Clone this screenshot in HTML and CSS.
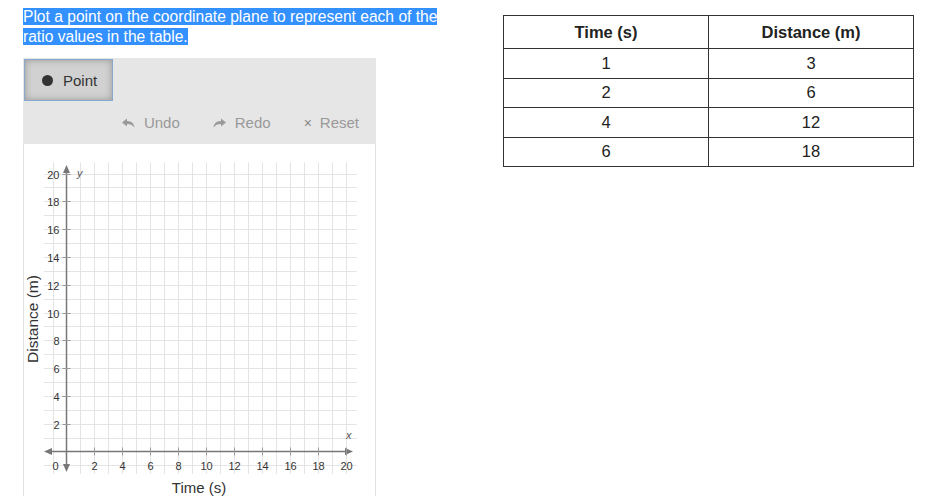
FILE: index.html
```html
<!DOCTYPE html>
<html>
<head>
<meta charset="utf-8">
<link rel="stylesheet" href="styles.css">
</head>
<body>
<div class="page">
  <div class="left">
    <p class="prompt"><span class="sel">Plot a point on the coordinate plane to represent each of the ratio values in the table.</span></p>
    <div class="widget">
      <div class="toolbar">
        <div class="tools">
          <button class="tool active"><span class="dot"></span>Point</button>
        </div>
        <div class="actions">
          <span class="act"><svg width="13" height="10" viewBox="0 0 13 10"><path d="M0 4.5 L5 0.5 L5 3 C9 3 12 5 12.5 9.5 C10.5 7 8.5 6 5 6 L5 8.5 Z" fill="#9a9a9a"/></svg>Undo</span>
          <span class="act"><svg width="13" height="10" viewBox="0 0 13 10"><path d="M13 4.5 L8 0.5 L8 3 C4 3 1 5 0.5 9.5 C2.5 7 4.5 6 8 6 L8 8.5 Z" fill="#9a9a9a"/></svg>Redo</span>
          <span class="act"><span class="x">×</span>Reset</span>
        </div>
      </div>
      <div class="graph">
        <svg class="plane" width="352" height="351" viewBox="0 0 352 351">
          <g id="grid" stroke="#e4e4e4" stroke-width="1"></g>
          <g stroke="#777" stroke-width="1.5" fill="#777">
            <line x1="26" y1="307.5" x2="326" y2="307.5"/>
            <path d="M21 307.5 L29 304 L29 311 Z" stroke="none"/>
            <path d="M330 307.5 L322 304 L322 311 Z" stroke="none"/>
            <line x1="43.5" y1="26" x2="43.5" y2="323"/>
            <path d="M43.5 21 L40 29 L47 29 Z" stroke="none"/>
            <path d="M43.5 328 L40 320 L47 320 Z" stroke="none"/>
          </g>
          <g id="ticks" stroke="#9a9a9a" stroke-width="1"></g>
          <g id="labels" class="lbl"></g>
          <text x="54" y="33" class="var">y</text>
          <text x="323" y="295" class="var">x</text>
        </svg>
        <div class="ylabel">Distance (m)</div>
        <div class="xlabel">Time (s)</div>
      </div>
    </div>
  </div>
  <div class="right">
    <table class="data">
      <thead>
        <tr><th>Time (s)</th><th>Distance (m)</th></tr>
      </thead>
      <tbody>
        <tr><td>1</td><td>3</td></tr>
        <tr><td>2</td><td>6</td></tr>
        <tr><td>4</td><td>12</td></tr>
        <tr><td>6</td><td>18</td></tr>
      </tbody>
    </table>
  </div>
</div>
<script src="script.js"></script>
</body>
</html>
```

FILE: script.js
```js
(function () {
  var NS = "http://www.w3.org/2000/svg";
  var ox = 43.5, oy = 307.5, sx = 13.95, sy = 13.9;
  var grid = document.getElementById("grid");
  var ticks = document.getElementById("ticks");
  var labels = document.getElementById("labels");
  function el(tag, attrs, parent, text) {
    var e = document.createElementNS(NS, tag);
    for (var k in attrs) e.setAttribute(k, attrs[k]);
    if (text !== undefined) e.textContent = text;
    parent.appendChild(e);
    return e;
  }
  var left = ox - sx * 1.6, right = ox + sx * 20.8;
  var top = oy - sy * 20.8, bottom = oy + sy * 1.6;
  for (var i = -1; i <= 20; i++) {
    if (i === 0) continue;
    var x = Math.round(ox + sx * i) + 0.5;
    var y = Math.round(oy - sy * i) + 0.5;
    el("line", { x1: x, y1: top, x2: x, y2: bottom }, grid);
    el("line", { x1: left, y1: y, x2: right, y2: y }, grid);
  }
  for (var v = 2; v <= 20; v += 2) {
    var tx = Math.round(ox + sx * v) + 0.5;
    var ty = Math.round(oy - sy * v) + 0.5;
    el("line", { x1: tx, y1: oy - 4, x2: tx, y2: oy + 4 }, ticks);
    el("line", { x1: ox - 4, y1: ty, x2: ox + 4, y2: ty }, ticks);
    el("text", { x: tx, y: oy + 18, "text-anchor": "middle" }, labels, String(v));
    el("text", { x: ox - 7, y: ty + 4, "text-anchor": "end" }, labels, String(v));
  }
  el("text", { x: ox - 11, y: oy + 18, "text-anchor": "middle" }, labels, "0");
})();
```

FILE: styles.css
```css
* { box-sizing: border-box; }
body {
  margin: 0;
  background: #fff;
  font-family: "Liberation Sans", Arial, sans-serif;
  color: #333;
}
.page {
  display: flex;
  align-items: flex-start;
  padding: 7px 0 0 23px;
}
.left {
  width: 440px;
}
.prompt {
  margin: 0;
  font-size: 15.6px;
  line-height: 20px;
  width: 430px;
}
.sel {
  background: #3390ff;
  color: #fff;
}
.widget {
  margin-top: 11px;
  width: 353px;
}
.toolbar {
  background: #e6e6e6;
  height: 86px;
  display: flex;
  flex-direction: column;
}
.tools {
  display: flex;
  height: 43px;
}
.tool {
  margin: 1px 0 0 1px;
  width: 89px;
  height: 42px;
  border: 1px solid #86a9cc;
  background: #d1d1d1;
  box-shadow: inset 0 0 7px rgba(0,0,0,0.28);
  font-family: "Liberation Sans", Arial, sans-serif;
  font-size: 15px;
  color: #333;
  display: flex;
  align-items: center;
  padding: 0 0 0 17px;
}
.dot {
  width: 11px;
  height: 11px;
  border-radius: 50%;
  background: #333;
  margin-right: 10px;
}
.actions {
  display: flex;
  justify-content: flex-end;
  align-items: center;
  height: 43px;
  padding-right: 17px;
  font-size: 15px;
  color: #999;
}
.act {
  display: flex;
  align-items: center;
  margin-left: 33px;
}
.act svg {
  margin-right: 9px;
}
.x {
  font-size: 14px;
  margin-right: 8px;
  color: #888;
}
.graph {
  position: relative;
  background: #fff;
  border-left: 1px solid #e2e2e2;
  border-right: 1px solid #e2e2e2;
  height: 360px;
}
.plane {
  display: block;
  margin-left: -1px;
}
.lbl {
  font-family: "Liberation Sans", Arial, sans-serif;
  font-size: 11px;
  fill: #333;
}
.var {
  font-family: "Liberation Sans", Arial, sans-serif;
  font-size: 11px;
  font-style: italic;
  fill: #555;
}
.ylabel {
  position: absolute;
  left: 9px;
  top: 175px;
  transform: translate(-50%, -50%) rotate(-90deg);
  font-size: 15.5px;
  color: #333;
  white-space: nowrap;
}
.xlabel {
  position: absolute;
  left: 175px;
  top: 335px;
  transform: translateX(-50%);
  font-size: 15px;
  color: #333;
  white-space: nowrap;
}
.right {
  margin-left: 40px;
  padding-top: 8px;
}
.data {
  border-collapse: collapse;
  width: 411px;
  font-family: "Liberation Sans", Arial, sans-serif;
  font-size: 16.5px;
  color: #222;
}
.data th, .data td {
  border: 1.5px solid #333;
  text-align: center;
  width: 50%;
  padding: 0;
}
.data th {
  height: 33px;
  font-weight: bold;
}
.data td {
  height: 29.5px;
}
```
